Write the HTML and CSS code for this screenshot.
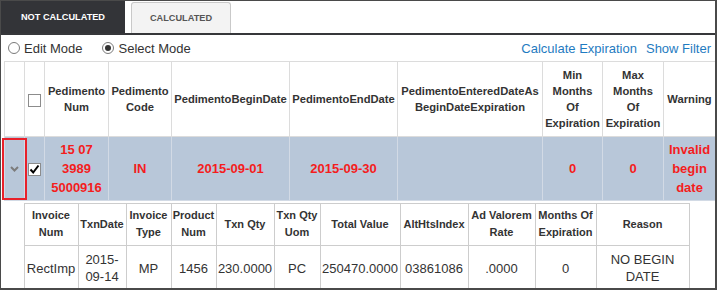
FILE: index.html
```html
<!DOCTYPE html>
<html lang="en">
<head>
  <meta charset="UTF-8" />
  <title>Pedimento Expiration</title>
  <link rel="stylesheet" href="styles.css">
</head>
<body>

<div class="frame">
  <div class="tabs">
    <div class="tab active">NOT CALCULATED</div>
    <div class="tab">CALCULATED</div>
  </div>

  <div class="toolbar">
    <label class="radio"><span class="dot"></span>Edit Mode</label>
    <label class="radio on"><span class="dot"></span>Select Mode</label>
    <div class="links">
      <a href="#">Calculate Expiration</a>
      <a href="#">Show Filter</a>
    </div>
  </div>

  <table class="grid">
    <colgroup>
      <col class="w20"><col class="w20"><col class="w64"><col class="w63">
      <col class="w118"><col class="w108"><col class="w145"><col class="w60">
      <col class="w61"><col class="w52">
    </colgroup>
    <thead>
      <tr>
        <th></th>
        <th><span class="check"></span></th>
        <th>Pedimento<br>Num</th>
        <th>Pedimento<br>Code</th>
        <th>PedimentoBeginDate</th>
        <th>PedimentoEndDate</th>
        <th>PedimentoEnteredDateAs<br>BeginDateExpiration</th>
        <th>Min<br>Months<br>Of<br>Expiration</th>
        <th>Max<br>Months<br>Of<br>Expiration</th>
        <th>Warning</th>
      </tr>
    </thead>
    <tbody>
      <tr class="row-warn">
        <td class="expand">
          <svg width="9" height="6" viewBox="0 0 9 6"><polyline points="1,1 4.5,4.5 8,1" fill="none" stroke="#7c7c7c" stroke-width="2"/></svg>
          <span class="mark"></span>
        </td>
        <td><span class="check">
          <svg width="13" height="13" viewBox="0 0 13 13"><polyline points="2.5,6.5 5.2,9.5 10.5,2.5" fill="none" stroke="#000" stroke-width="2"/></svg>
        </span></td>
        <td>15 07 3989 5000916</td>
        <td>IN</td>
        <td>2015-09-01</td>
        <td>2015-09-30</td>
        <td></td>
        <td>0</td>
        <td>0</td>
        <td>Invalid begin date</td>
      </tr>
      <tr class="detail">
        <td colspan="10">
          <table class="sub">
            <colgroup>
              <col class="w54"><col class="w48"><col class="w45"><col class="w45">
              <col class="w58"><col class="w46"><col class="w80"><col class="w68">
              <col class="w67"><col class="w61"><col class="w93">
            </colgroup>
            <tr>
              <th>Invoice<br>Num</th>
              <th>TxnDate</th>
              <th>Invoice<br>Type</th>
              <th>Product<br>Num</th>
              <th>Txn Qty</th>
              <th>Txn Qty<br>Uom</th>
              <th>Total Value</th>
              <th>AltHtsIndex</th>
              <th>Ad Valorem<br>Rate</th>
              <th>Months Of<br>Expiration</th>
              <th>Reason</th>
            </tr>
            <tr>
              <td>RectImp</td>
              <td>2015-<br>09-14</td>
              <td>MP</td>
              <td>1456</td>
              <td>230.0000</td>
              <td>PC</td>
              <td>250470.0000</td>
              <td>03861086</td>
              <td>.0000</td>
              <td>0</td>
              <td>NO BEGIN<br>DATE</td>
            </tr>
          </table>
        </td>
      </tr>
    </tbody>
  </table>
</div>

</body>
</html>
```

FILE: styles.css
```css
body {
  margin: 0;
  font-family: "Liberation Sans", Arial, sans-serif;
  color: #333;
  background: #fff;
}
.frame {
  box-sizing: border-box;
  width: 717px;
  height: 290px;
  overflow: hidden;
  border: 1px solid #4a4a4a;
  border-right-width: 2px;
  border-bottom-width: 2px;
}
.tabs {
  display: flex;
  height: 32px;
  border-bottom: 2px solid #36373a;
}
.tab {
  box-sizing: border-box;
  display: flex;
  align-items: center;
  justify-content: center;
  font-size: 9.2px;
  font-weight: bold;
  color: #555;
}
.tab.active {
  width: 124px;
  background: #333438;
  color: #fff;
}
.tab + .tab {
  width: 100px;
  margin: 1px 0 0 6px;
  background: #f3f3f3;
  border: 1px solid #c9c9c9;
  border-bottom: none;
  border-radius: 3px 3px 0 0;
}
.toolbar {
  display: flex;
  align-items: center;
  height: 26px;
  padding: 0 4px 0 7px;
  font-size: 13px;
}
.radio {
  display: flex;
  align-items: center;
  gap: 4px;
  margin-right: 19px;
}
.radio.on {
  gap: 5px;
}
.radio .dot {
  box-sizing: border-box;
  width: 12px;
  height: 12px;
  border: 1px solid #7a7a7a;
  border-radius: 50%;
  background: #fff;
  display: flex;
  align-items: center;
  justify-content: center;
}
.radio.on .dot::after {
  content: "";
  width: 6px;
  height: 6px;
  border-radius: 50%;
  background: #333;
}
.links {
  margin-left: auto;
  display: flex;
  gap: 9px;
}
.links a {
  color: #1f7bc1;
  text-decoration: none;
}
.grid {
  margin-left: 3px;
  width: 711px;
  table-layout: fixed;
  border-collapse: collapse;
}
.grid > thead th {
  border: 1px solid #dcdcdc;
  padding: 5px 1px;
  font-size: 11.2px;
  line-height: 16px;
  font-weight: bold;
  color: #333;
  text-align: center;
  vertical-align: middle;
}
.check {
  box-sizing: border-box;
  display: inline-block;
  vertical-align: middle;
  width: 13px;
  height: 13px;
  border: 1px solid #8c8c8c;
  background: #fff;
  position: relative;
}
.check svg {
  position: absolute;
  left: -1px;
  top: -1px;
}
.row-warn td {
  background: #b8c7d9;
  border: 1px solid #d2dae5;
  padding: 3px 1px;
  font-size: 13px;
  line-height: 19px;
  font-weight: bold;
  color: #f41d1d;
  text-align: center;
  vertical-align: middle;
}
.row-warn td.expand {
  position: relative;
}
.expand svg {
  display: block;
  margin: 0 auto;
}
/* red highlight drawn over the expander cell */
.expand .mark {
  position: absolute;
  left: -3px;
  right: -3px;
  top: 1px;
  bottom: 0;
  border: 2px solid #e8202a;
}
.detail > td {
  padding: 2px 0 0 19px;
  border: none;
}
.sub {
  width: 665px;
  table-layout: fixed;
  border-collapse: collapse;
}
.sub th,
.sub td {
  border: 1px solid #cdcdcd;
  text-align: center;
  vertical-align: middle;
  color: #333;
}
.sub th {
  font-size: 11px;
  line-height: 17px;
  font-weight: bold;
  padding: 3px 1px 4px;
}
.sub td {
  font-size: 13px;
  line-height: 17px;
  padding: 5px 1px;
}

/* column widths */
.w20 { width: 20px; }
.w45 { width: 45px; }
.w46 { width: 46px; }
.w48 { width: 48px; }
.w52 { width: 52px; }
.w54 { width: 54px; }
.w58 { width: 58px; }
.w60 { width: 60px; }
.w61 { width: 61px; }
.w63 { width: 63px; }
.w64 { width: 64px; }
.w67 { width: 67px; }
.w68 { width: 68px; }
.w80 { width: 80px; }
.w93 { width: 93px; }
.w108 { width: 108px; }
.w118 { width: 118px; }
.w145 { width: 145px; }
```
